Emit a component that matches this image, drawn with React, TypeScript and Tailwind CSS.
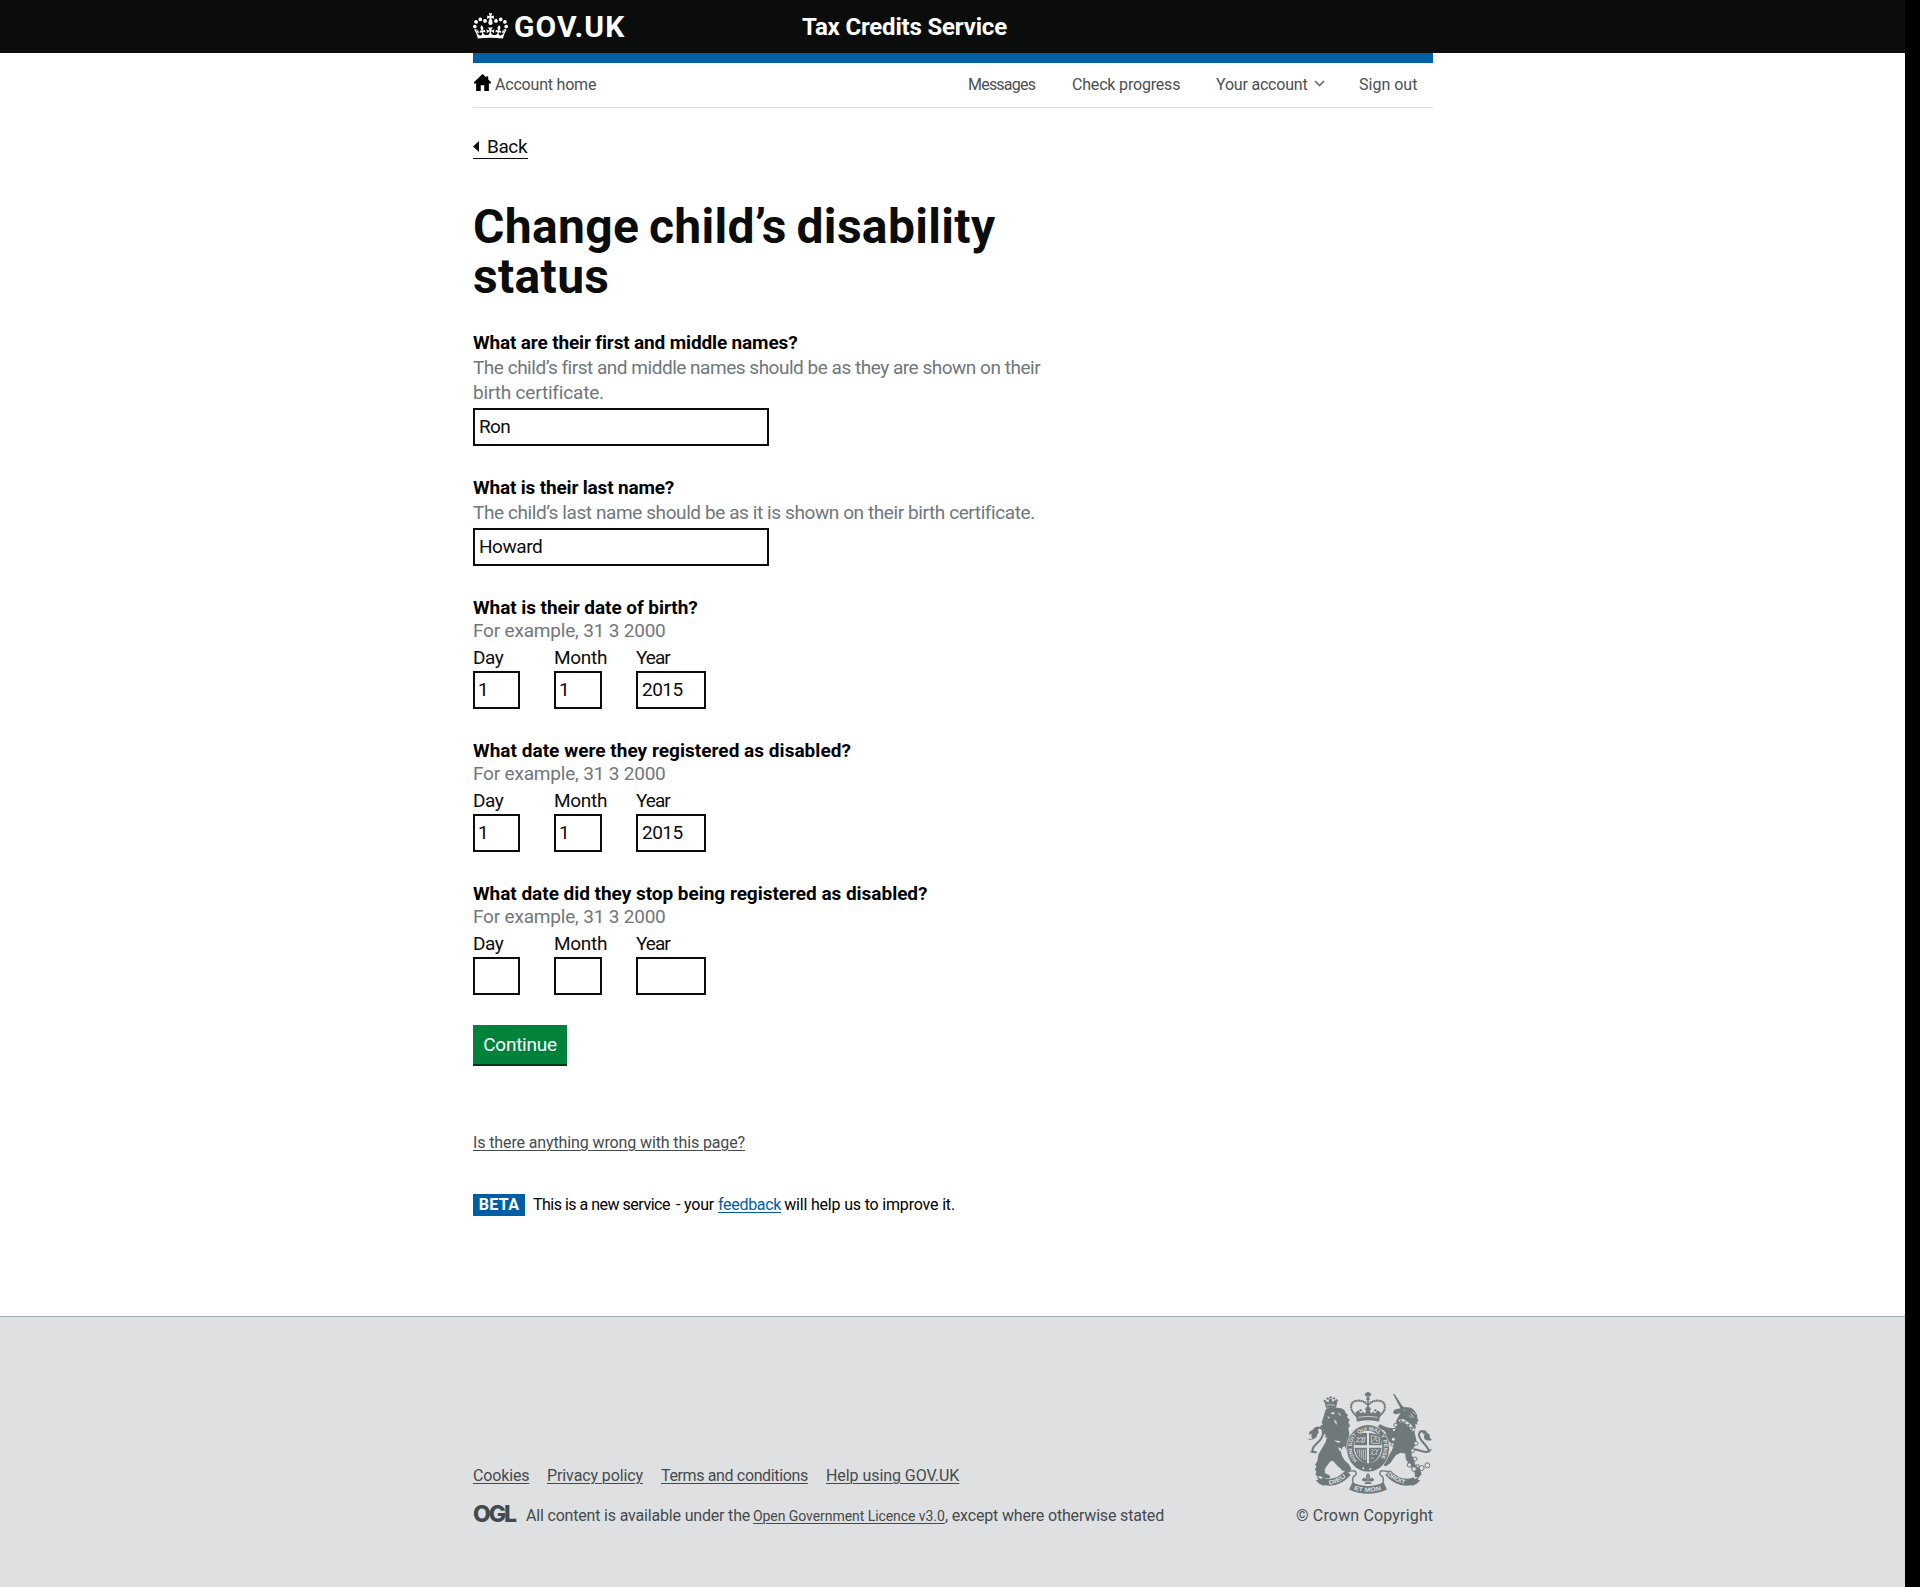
import type { ReactNode } from 'react';

const CROWN =
  'M25 30.2c3.5 1.5 7.7-.2 9.1-3.7 1.5-3.6-.2-7.8-3.9-9.2-3.6-1.4-7.6.3-9.1 3.9-1.4 3.5.3 7.5 3.9 9zM9 39.5c3.6 1.5 7.8-.2 9.2-3.7 1.5-3.6-.2-7.8-3.9-9.1-3.6-1.5-7.6.2-9.1 3.8-1.4 3.5.3 7.5 3.8 9zM4.4 57.2c3.5 1.5 7.7-.2 9.1-3.8 1.5-3.6-.2-7.7-3.9-9.1-3.5-1.5-7.6.3-9.1 3.8-1.4 3.5.3 7.6 3.9 9.1zm38.3-21.4c3.5 1.5 7.7-.2 9.1-3.8 1.5-3.6-.2-7.7-3.9-9.1-3.6-1.5-7.6.3-9.1 3.8-1.3 3.6.4 7.7 3.9 9.1zm64.4-5.6c-3.6 1.5-7.8-.2-9.1-3.7-1.5-3.6.2-7.8 3.8-9.2 3.6-1.4 7.7.3 9.2 3.9 1.3 3.5-.4 7.5-3.9 9zm15.9 9.3c-3.6 1.5-7.7-.2-9.1-3.7-1.5-3.6.2-7.8 3.7-9.1 3.6-1.5 7.7.2 9.2 3.8 1.5 3.5-.3 7.5-3.8 9zm4.7 17.7c-3.6 1.5-7.8-.2-9.2-3.8-1.5-3.6.2-7.7 3.9-9.1 3.6-1.5 7.7.3 9.2 3.8 1.3 3.5-.4 7.6-3.9 9.1zM89.3 35.8c-3.6 1.5-7.8-.2-9.2-3.8-1.4-3.6.2-7.7 3.9-9.1 3.6-1.5 7.7.3 9.2 3.8 1.4 3.6-.3 7.7-3.9 9.1zM69.7 17.7l8.9 4.7V9.3l-8.9 2.8c-.2-.3-.5-.6-.9-.9L72.4 0H59.6l3.5 11.2c-.3.3-.6.5-.9.9l-8.8-2.8v13.1l8.8-4.7c.3.3.6.7.9.9l-5 15.4v.1c-.2.8-.4 1.6-.4 2.4 0 4.1 3.1 7.5 7 8.1h.2c.3 0 .7.1 1 .1.4 0 .7 0 1-.1h.2c4-.6 7.1-4.1 7.1-8.1 0-.8-.1-1.7-.4-2.4V34l-5.1-15.4c.4-.2.7-.6 1-.9zM66 92.8c16.9 0 32.8 1.1 47.1 3.2 4-16.9 8.9-26.7 14-33.5l-9.6-3.4c1 4.9 1.1 7.2 0 10.2-1.5-1.4-3-4.3-4.2-8.7L108.6 76c2.8-2 5-3.2 7.5-3.3-4.4 9.4-10 11.9-13.6 11.2-4.3-.8-6.3-4.6-5.6-7.9 1-4.7 5.7-5.9 8-.5 4.3-8.7-3-11.4-7.6-8.8 7.1-7.2 7.9-13.5 2.1-21.1-8 6.1-8.1 12.3-4.5 20.8-4.7-5.4-12.1-2.5-9.5 6.2 3.4-5.2 7.9-2 7.2 3.1-.6 4.3-6.4 7.8-13.5 7.2-10.3-.9-10.9-8-11.2-13.8 2.5-.5 7.1 1.8 11 7.3L80.2 60c-4.1 4.4-8 5.3-12.3 5.4 1.4-4.4 8-11.6 8-11.6H55.5s6.4 7.2 7.9 11.6c-4.2-.1-8-1-12.3-5.4l1.4 16.4c3.9-5.5 8.5-7.7 10.9-7.3-.3 5.8-.9 12.8-11.1 13.8-7.2.6-12.9-2.9-13.5-7.2-.7-5 3.8-8.3 7.1-3.1 2.7-8.7-4.6-11.6-9.4-6.2 3.7-8.5 3.6-14.7-4.6-20.8-5.8 7.6-5 13.9 2.2 21.1-4.7-2.6-11.9.1-7.7 8.8 2.3-5.5 7.1-4.2 8.1.5.7 3.3-1.3 7.1-5.7 7.9-3.5.7-9-1.8-13.5-11.2 2.5.1 4.7 1.3 7.5 3.3l-4.7-15.4c-1.2 4.4-2.7 7.2-4.3 8.7-1.1-3-.9-5.3 0-10.2l-9.5 3.4c5 6.9 9.9 16.7 14 33.5 14.8-2.1 30.8-3.2 47.7-3.2z';

function Crest() {
  return (
    <svg className="block h-[104px] w-[126px]" viewBox="84 33 378 312" fill="#6f787b" stroke="none">
      {/* centre crown */}
      <path d="M263 36h8v4h5v7h-5v5h-8v-5h-5v-7h5z" />
      <circle cx="267" cy="57" r="5.5" />
      <g fill="none" stroke="#6f787b" strokeWidth="6" strokeDasharray="6 1">
        <path d="M233 108C210 92 211 64 234 62C249 61 258 66 265 74" />
        <path d="M301 108C324 92 323 64 300 62C285 61 276 66 269 74" />
        <path d="M267 62v26" />
      </g>
      <path d="M229 98l9-7 7 9 8-5 5 6 4-12h-5l4-7h12l4 7h-5l4 12 5-6 8 5 7-9 9 7-5 27q-33-8-66 0z" />
      <path d="M238 112q29-6 58 0" fill="none" stroke="#dee0e2" strokeWidth="2.5" />
      <circle cx="245" cy="91" r="3.5" />
      <circle cx="289" cy="91" r="3.5" />

      {/* lion */}
      <path d="M137 68l4-6 7 6 3-12h7l3 11 7-7 7 6-4 17h-30z" />
      <circle cx="137" cy="63" r="3.5" />
      <circle cx="146" cy="56" r="3.5" />
      <circle cx="155" cy="52" r="3.5" />
      <circle cx="165" cy="55" r="3.5" />
      <circle cx="173" cy="61" r="3.5" />
      <path d="M142 76q13-4 26 0" fill="none" stroke="#dee0e2" strokeWidth="2.2" />
      <path d="M141 86q18-7 38-2 17 0 21 14l7 7-3 6 8 9-4 7 5 10-5 8 2 12 2 14 2 14 5 11 1 20-6 6-9-6-8-18-6 4-5 14 3 12 9 14 11 10 8 14-3 7-24-1-4-5-14-13-10-12-8 2-9 12-8 12 1 11 15 8-1 8-20-2-7-4-9 1-7-7 3-7-4-8 5-9-5-4 7-11 3-20 10-18 12-20 4-16-6 3 2-12-8 4 3-13-4-6-9-3 4-7 6-2-4-6z" />
      <path d="M160 96l8 3-4 4-9-1zM146 108l8 6-7 1zM178 96l9 11-7-2zM165 117l8 9 0 9-6-9z" fill="#dee0e2" />
      <path d="M165 181l20 3-7 5zM176 202l6 10 9 6-5-13z" fill="#dee0e2" />
      <path d="M113 216C93 219 99 204 114 190C137 170 137 143 120 143C109 143 104 147 102 157" fill="none" stroke="#6f787b" strokeWidth="6" />
      <path d="M84 177q13-1 17 0-7-8-2-15-5-1-9 4-1-13 11-15 4-9 18-12-3 14 0 20-7 5-6 12-12 12-29 6z" />
      <path d="M102 219l-10-2 4-4 6 2z" />

      {/* unicorn */}
      <path d="M342 42l5 1 25 38-7 5z" />
      <path d="M366 84l-2-11 9 8 10 1q16-1 25 12 8 10 7 21l4 9-6 1 3 9-7-2 1 11q-5 11-3 15l5 22-4 18-9 13-1 15 8 12 2 15 15 14 5 16-9 9-11-1-1-13-7-11-11-16-9-15-1-15-13-3-14 6-9 12-8 12-14 11-8-4 8-13 8-15 9-15 5-12-8-13-18-1-11 6-7-6 1-10-5-14 8-6 11 6 8-2-9-10-13-2-3-9 6-6 12 6 14 4 18 2 8-9-4-12 6-12 8-14-6 3-12 2-5-6 4-8z" />
      <path d="M360 124l12-2 20 14 12 17" fill="none" stroke="#dee0e2" strokeWidth="10" />
      <path d="M360 130l6-9 4 8 8-4 1 11 11-3-1 11 11-2-2 10 9 3" fill="none" stroke="#6f787b" strokeWidth="3.4" />
      <path d="M375 90l4 3M396 101l8 12M400 95l10 8M391 106l7 8" stroke="#dee0e2" strokeWidth="2.3" />
      <path d="M404 208C428 211 449 223 448 210C447 197 418 180 420 164C421 151 433 151 437 162" fill="none" stroke="#6f787b" strokeWidth="6" />
      <path d="M426 152q16-5 18 7 11 3 8 13 3 5 7 8-16 5-23-4-4-6 1-14-5-2-11-10zM446 211l13-5-7 12z" />
      <g fill="#dee0e2" stroke="#6f787b" strokeWidth="3">
        <circle cx="350" cy="135" r="5.5" />
        <circle cx="345" cy="150" r="5" />
        <circle cx="343" cy="178" r="6" />
        <circle cx="340" cy="193" r="5" />
        <circle cx="411" cy="190" r="6" />
        <circle cx="401" cy="212" r="5.5" />
        <circle cx="408" cy="237" r="6" />
        <circle cx="391" cy="255" r="6.5" />
        <circle cx="405" cy="267" r="7" />
        <circle cx="428" cy="264" r="7.5" />
        <circle cx="445" cy="256" r="7.5" />
        <circle cx="416" cy="258" r="4.5" />
      </g>

      {/* garter and shield */}
      <ellipse cx="267" cy="205" rx="64" ry="71" stroke="#dee0e2" strokeWidth="2" />
      <ellipse cx="267" cy="201" rx="43" ry="49" fill="#dee0e2" />
      <path id="motto" d="M235 242C209 214 213 171 248 156C292 139 324 174 313 215C310 229 304 240 296 247" fill="none" />
      <text fill="#dee0e2" fontFamily="Liberation Sans" fontWeight="700" fontSize="15.5">
        <textPath href="#motto" textLength="236" lengthAdjust="spacingAndGlyphs">HONI SOIT QUI MAL Y PENSE</textPath>
      </text>
      <path d="M232 168q17-12 32-9v37h-38q0-17 6-28z" />
      <path d="M270 159q18 0 31 10 7 10 7 27h-38z" />
      <path d="M226 203h38v46q-28-2-38-46z" />
      <path d="M270 203h38q-9 43-38 46z" />
      <g fill="none" stroke="#dee0e2" strokeWidth="2.2">
        <path d="M232 174l5-3 3 5 6-4 3 5 7-4M230 186l6-4 3 5 6-4 4 5 7-5" />
        <path d="M239 174l-5 11M252 171l-4 17M259 170l-4 18" />
        <path d="M277 166v24h24v-17zM280 185l10-13 2 12 6-4" />
        <path d="M236 208v12M242 208v22M248 208v28M254 208v32M260 208v32" />
        <path d="M275 211l5-3 4 4 6-4 4 4 6-4M275 224l5-3 4 4 6-4 4 4M275 236l5-3 4 4" />
        <path d="M281 213l-3 9M294 212l-3 9" />
      </g>
      <circle cx="253" cy="265" r="3" fill="#dee0e2" />
      <circle cx="274" cy="267" r="3" fill="#dee0e2" />

      {/* ribbon */}
      <g fill="none" stroke="#6f787b" strokeWidth="21">
        <path d="M126 301Q168 320 208 278" />
        <path d="M408 301Q366 320 326 278" />
        <path d="M215 318Q267 342 319 318" strokeWidth="23" />
      </g>
      <path d="M112 289q10 9 26 9l-4 20q-13-4-24-17l8-2zM422 289q-10 9-26 9l4 20q13-4 24-17l-8-2z" />
      <path d="M202 276Q236 266 231 284Q215 292 224 312" fill="none" stroke="#6f787b" strokeWidth="4" />
      <path d="M332 276Q298 266 303 284Q319 292 310 312" fill="none" stroke="#6f787b" strokeWidth="4" />
      <path d="M267 278q10 11 5 20 8-9 13 0-1 9-12 6l5 8h-22l5-8q-11 3-12-6 5-9 13 0-5-9 5-20z" />
      <path d="M267 284v22M257 305h20" stroke="#dee0e2" strokeWidth="1.6" />
      <path id="ribbon-left" d="M151 314Q182 310 209 284" fill="none" />
      <path id="ribbon-mid" d="M224 328Q267 343 311 328" fill="none" />
      <path id="ribbon-right" d="M324 284Q350 308 385 314" fill="none" />
      <g fill="#dee0e2" fontFamily="Liberation Sans" fontWeight="700" fontSize="18">
        <text>
          <textPath href="#ribbon-left" textLength="56" lengthAdjust="spacingAndGlyphs">DIEU</textPath>
        </text>
        <text>
          <textPath href="#ribbon-mid" textLength="84" lengthAdjust="spacingAndGlyphs">ET MON</textPath>
        </text>
        <text>
          <textPath href="#ribbon-right" textLength="60" lengthAdjust="spacingAndGlyphs">DROIT</textPath>
        </text>
      </g>
    </svg>
  );
}

function Question({ className, children }: { className: string; children: ReactNode }) {
  return <div className={`whitespace-nowrap text-[19px] font-bold text-black ${className}`}>{children}</div>;
}

function TextField({ value, className }: { value: string; className: string }) {
  return (
    <div className="mt-[3px] flex h-[38px] w-[296px] items-center border-2 border-[#0b0c0c] pl-1 text-[19px]">
      <span className={className}>{value}</span>
    </div>
  );
}

function DateFields({ day, month, year }: { day: string; month: string; year: string }) {
  return (
    <>
      <div className="text-[19px] leading-[23px] tracking-[-0.19px] text-[#6f777b]">For example, 31 3 2000</div>
      <div className="mt-1 flex text-[19px]">
        <div className="w-[81px]">
          <div className="leading-[23px] tracking-[-0.5px]">Day</div>
          <div className="mt-0.5 flex h-[38px] w-[47px] items-center border-2 border-[#0b0c0c] pl-[3px]">{day}</div>
        </div>
        <div className="w-[82px]">
          <div className="leading-[23px] tracking-[-0.3px]">Month</div>
          <div className="mt-0.5 flex h-[38px] w-12 items-center border-2 border-[#0b0c0c] pl-[3px]">{month}</div>
        </div>
        <div>
          <div className="leading-[23px] tracking-[-1px]">Year</div>
          <div className="mt-0.5 flex h-[38px] w-[70px] items-center border-2 border-[#0b0c0c] pl-1 tracking-[-0.5px]">{year}</div>
        </div>
      </div>
    </>
  );
}

export default function App() {
  return (
    <div className="flex h-[1587px] w-[1920px] overflow-hidden bg-black font-['Roboto',sans-serif] text-[#0b0c0c]">
      <div className="flex w-[1905px] flex-col bg-white">
        <header className="flex h-[53px] shrink-0 items-start bg-[#0b0c0c] pl-[473px] text-white">
          <svg className="mt-[13px] h-[26px] w-[35px]" viewBox="0 0 132 97" fill="currentColor">
            <path d={CROWN} />
          </svg>
          <div className="mt-3 w-[294px] pl-[6px] text-[30px] font-bold leading-[30px] tracking-[1.1px]">GOV.UK</div>
          <div className="mt-3 text-[24px] font-bold leading-[30px] tracking-[-0.18px]">Tax Credits Service</div>
        </header>

        <main className="ml-[473px] w-[960px]">
          <nav className="flex h-[55px] border-b border-t-[10px] border-b-[#dee0e2] border-t-[#005ea5] pt-3 text-[16px] leading-[20px] text-[#4b4f51]">
            <svg className="-mt-px ml-px h-[17px] w-[17px]" viewBox="0 0 48 45" preserveAspectRatio="none" fill="#000">
              <path d="M24 0l11 9V6h5v8l8 8v3h-6v20H29V30H19v15H6V25H0v-3z" />
            </svg>
            <div className="ml-1 w-[473px] tracking-[-0.2px]">Account home</div>
            <div className="w-[104px] tracking-[-0.78px]">Messages</div>
            <div className="w-[144px] tracking-[-0.18px]">Check progress</div>
            <div className="flex w-[143px] tracking-[-0.2px]">
              Your account
              <svg className="ml-[6px] mt-[5px] h-[7px] w-[11px]" viewBox="0 0 11 7" fill="none" stroke="#6a6d6f" strokeWidth="1.7">
                <path d="M1 1l4.5 4.5L10 1" />
              </svg>
            </div>
            <div>Sign out</div>
          </nav>

          <a className="mt-[29px] flex h-[22px] w-[55px] border-b border-[#0b0c0c] text-[19px] leading-[20px]">
            <svg className="mt-1 h-[11px] w-[6px]" viewBox="0 0 6 11" fill="currentColor">
              <path d="M6 0v11L0 5.5z" />
            </svg>
            <span className="ml-2 tracking-[-0.4px]">Back</span>
          </a>

          <h1 className="mt-[43px] whitespace-nowrap text-[48px] font-bold leading-[50px] tracking-[0.33px] [word-spacing:-2.5px]">
            Change child’s disability
            <br />
            status
          </h1>

          <Question className="mt-7 leading-[25px] tracking-[-0.15px]">What are their first and middle names?</Question>
          <div className="whitespace-nowrap text-[19px] leading-[25px] tracking-[-0.48px] text-[#6f777b]">
            The child’s first and middle names should be as they are shown on their
            <br />
            <span className="tracking-[-0.18px]">birth certificate.</span>
          </div>
          <TextField value="Ron" className="tracking-[-0.6px]" />

          <Question className="mt-[29px] leading-[25px] tracking-[-0.17px]">What is their last name?</Question>
          <div className="whitespace-nowrap text-[19px] leading-[25px] tracking-[-0.41px] text-[#6f777b]">
            The child’s last name should be as it is shown on their birth certificate.
          </div>
          <TextField value="Howard" className="tracking-[-0.45px]" />

          <Question className="mt-[30px] leading-[23px] tracking-[-0.06px]">What is their date of birth?</Question>
          <DateFields day="1" month="1" year="2015" />
          <Question className="mt-[30px] leading-[23px] tracking-[0.03px]">What date were they registered as disabled?</Question>
          <DateFields day="1" month="1" year="2015" />
          <Question className="mt-[30px] leading-[23px] tracking-[-0.03px]">What date did they stop being registered as disabled?</Question>
          <DateFields day="" month="" year="" />

          <button className="mt-[30px] flex h-[39px] w-[94px] items-center justify-center bg-[#00823b] pt-0.5 text-[19px] tracking-[-0.25px] text-white shadow-[0_2px_0_#003618]">
            Continue
          </button>

          <div className="mt-[69px] h-5 text-[16px] leading-[20px] tracking-[-0.12px] text-[#454a4d] underline decoration-1 underline-offset-2">
            Is there anything wrong with this page?
          </div>

          <div className="mt-[41px] flex h-[22px] text-[16px] leading-[21px] text-black">
            <span className="w-[52px] bg-[#005ea5] text-center font-bold tracking-[0.3px] text-white">BETA</span>
            <span className="ml-2 w-[143px] tracking-[-0.5px]">This is a new service</span>
            <span className="w-[42px] tracking-[-0.2px]">- your</span>
            <a className="tracking-[-0.3px] text-[#005ea5] underline decoration-1 underline-offset-2">feedback</a>
            <span className="ml-[3px] tracking-[-0.18px]">will help us to improve it.</span>
          </div>
        </main>

        <footer className="mt-[100px] flex flex-1 border-t border-[#a1acb2] bg-[#dee0e2] pl-[473px] text-[16px] leading-[20px] text-[#454a4d]">
          <div className="w-[823px] pt-[149px]">
            <div className="flex underline decoration-1 underline-offset-2">
              <span className="w-[74px] tracking-[-0.15px]">Cookies</span>
              <span className="w-[114px] tracking-[-0.1px]">Privacy policy</span>
              <span className="w-[165px] tracking-[-0.36px]">Terms and conditions</span>
              <span className="tracking-[-0.06px]">Help using GOV.UK</span>
            </div>
            <div className="mt-5 flex whitespace-nowrap">
              <span className="w-[53px] font-['Inter',sans-serif] text-[23px] font-extrabold leading-[17px] tracking-[-2px]">OGL</span>
              <span className="w-[227px] tracking-[-0.18px]">All content is available under the</span>
              <a className="w-[192px] text-[14px] tracking-[-0.06px] underline decoration-1 underline-offset-2">Open Government Licence v3.0</a>
              <span className="tracking-[-0.17px]">, except where otherwise stated</span>
            </div>
          </div>
          <div className="pt-[74px]">
            <div className="ml-[11px]">
              <Crest />
            </div>
            <div className="mt-[11px] tracking-[0.16px]">© Crown Copyright</div>
          </div>
        </footer>
      </div>
    </div>
  );
}
